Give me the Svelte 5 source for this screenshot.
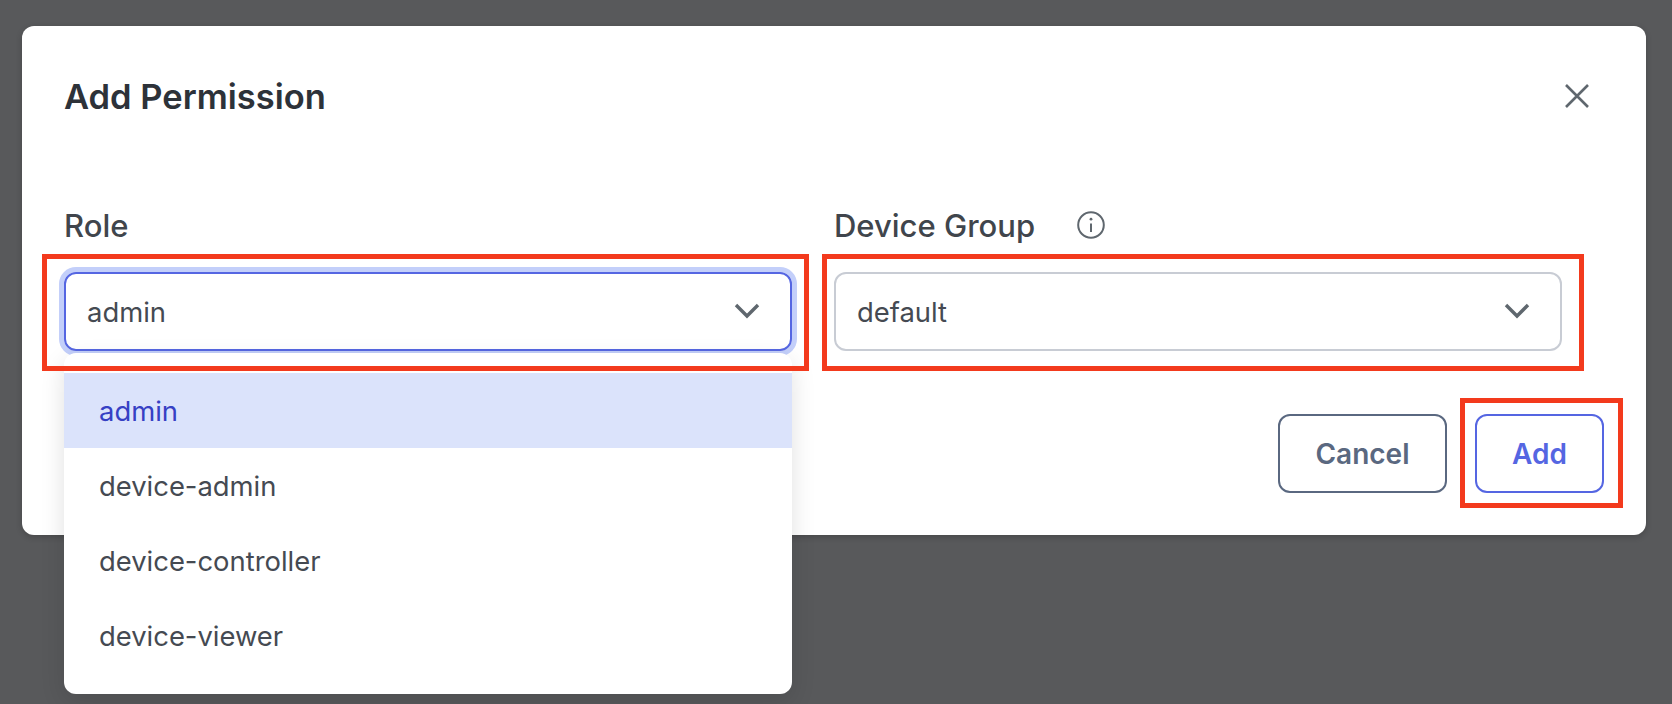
<script>
    const options = ['admin', 'device-admin', 'device-controller', 'device-viewer'];
    let role = 'admin';
</script>

<div class="page">
    <div class="modal">
        <header class="modal-header">
            <h2>Add Permission</h2>
            <button class="close" aria-label="Close">
                <svg width="26" height="26" viewBox="0 0 26 26" fill="none" stroke="#5f676e" stroke-width="2.6">
                    <path d="M2 2 L24 24 M24 2 L2 24" />
                </svg>
            </button>
        </header>

        <div class="fields">
            <div class="field">
                <div class="label">Role</div>
                <div class="select focused">
                    <span>{role}</span>
                    <svg class="chevron" width="26" height="16" viewBox="0 0 26 16" fill="none" stroke="#5f676e" stroke-width="3.4">
                        <path d="M2 2 L13 13 L24 2" />
                    </svg>
                    <div class="menu">
                        {#each options as option}
                            <div class="option" class:active={option === role}>{option}</div>
                        {/each}
                    </div>
                    <i class="mark mark-role"></i>
                </div>
            </div>
            <div class="field">
                <div class="label">
                    Device Group
                    <svg class="info" width="28" height="28" viewBox="0 0 28 28" fill="none" stroke="#5f676e">
                        <circle cx="14" cy="14" r="12.8" stroke-width="2" />
                        <path d="M14 12.5 V21" stroke-width="2" />
                        <circle cx="14" cy="8.2" r="1.4" fill="#5f676e" stroke="none" />
                    </svg>
                </div>
                <div class="select">
                    <span>default</span>
                    <svg class="chevron" width="26" height="16" viewBox="0 0 26 16" fill="none" stroke="#5f676e" stroke-width="3.4">
                        <path d="M2 2 L13 13 L24 2" />
                    </svg>
                    <i class="mark mark-group"></i>
                </div>
            </div>
        </div>

        <div class="actions">
            <button class="btn cancel">Cancel</button>
            <button class="btn add">
                Add
                <i class="mark mark-add"></i>
            </button>
        </div>
    </div>
</div>

<style>
    :global(body) {
        background: #58595b;
        overflow: hidden;
    }
    .page {
        height: 704px;
        box-sizing: border-box;
        padding: 26px 26px 0 22px;
        font-family: Inter, "Liberation Sans", sans-serif;
        color: #454a52;
    }
    .modal {
        background: white;
        border-radius: 12px;
        height: 509px;
        box-sizing: border-box;
        padding: 42px;
        box-shadow: 0 2px 6px rgba(0, 0, 0, 0.2);
    }
    .modal-header {
        display: flex;
        justify-content: space-between;
        align-items: center;
        height: 56px;
    }
    h2 {
        margin: 0;
        font-size: 34.5px;
        font-weight: 600;
        color: #2d3239;
    }
    .close {
        background: none;
        border: none;
        padding: 0;
        margin-right: 14px;
        display: flex;
    }
    .fields {
        display: grid;
        grid-template-columns: 1fr 1fr;
        margin-top: 84px;
    }
    .field {
        padding-right: 42px;
    }
    .label {
        display: flex;
        align-items: center;
        height: 48px;
        margin-top: -7px;
        margin-bottom: 23px;
        font-size: 31px;
        font-weight: 550;
        color: #40454c;
    }
    .info {
        margin-left: 42px;
    }
    .select {
        position: relative;
        display: flex;
        justify-content: space-between;
        align-items: center;
        height: 79px;
        box-sizing: border-box;
        padding: 0 30px 0 21px;
        border: 2px solid #c8ccd4;
        border-radius: 12px;
        font-size: 27.4px;
    }
    .select.focused {
        border-color: #5566e2;
        box-shadow: 0 0 0 5px #c3cffa;
    }
    .chevron {
        margin-top: -2px;
    }
    .menu {
        position: absolute;
        top: 79px;
        left: -2px;
        right: -2px;
        padding: 20px 0 21px;
        background: white;
        border-radius: 12px;
        box-shadow: 0 8px 24px rgba(0, 0, 0, 0.12);
    }
    .option {
        height: 75px;
        display: flex;
        align-items: center;
        padding-left: 35px;
    }
    .option.active {
        background: #dbe3fb;
        color: #3640c4;
    }
    .actions {
        display: flex;
        justify-content: flex-end;
        gap: 28px;
        margin-top: 63px;
    }
    .btn {
        position: relative;
        height: 79px;
        box-sizing: border-box;
        background: white;
        border-radius: 12px;
        font-family: inherit;
        font-size: 28px;
        font-weight: 600;
    }
    .cancel {
        width: 169px;
        border: 2px solid #5a6880;
        color: #5a6880;
    }
    .add {
        width: 129px;
        border: 2px solid #5566e2;
        color: #5566e2;
    }
    .mark {
        position: absolute;
        border: 5px solid #f33a1d;
        pointer-events: none;
    }
    .mark-role {
        left: -24px;
        top: -20px;
        right: -19px;
        bottom: -22px;
    }
    .mark-group {
        left: -14px;
        top: -20px;
        right: -24px;
        bottom: -22px;
    }
    .mark-add {
        left: -17px;
        top: -18px;
        right: -21px;
        bottom: -17px;
    }
</style>
